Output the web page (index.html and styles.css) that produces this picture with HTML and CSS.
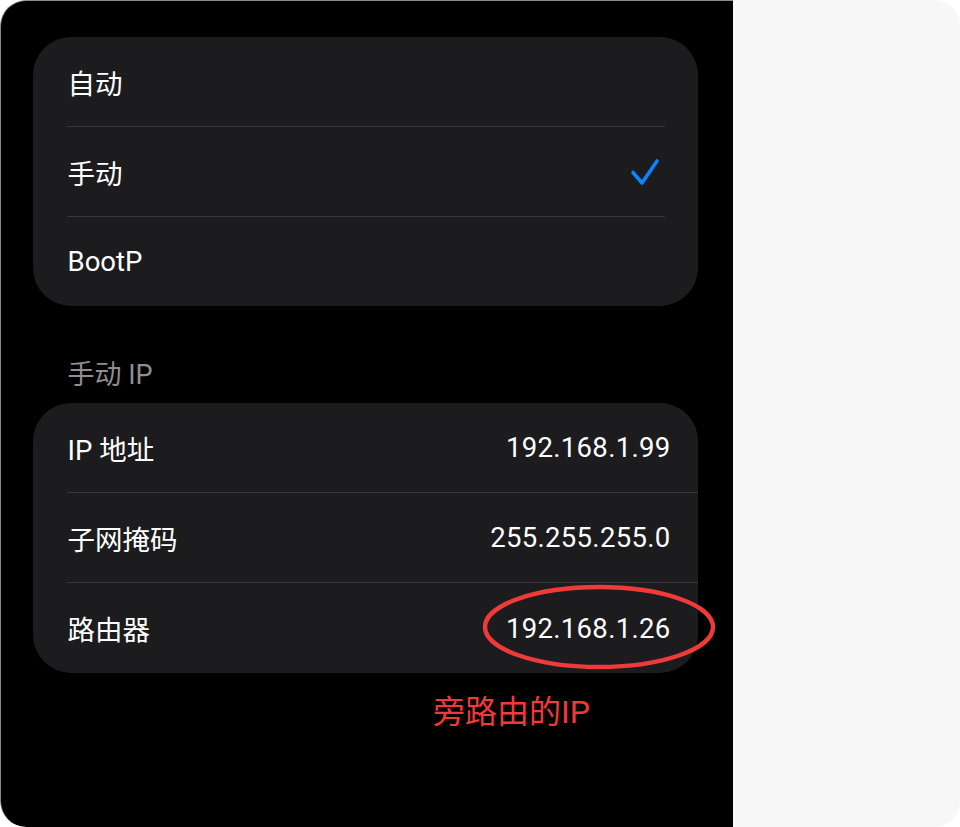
FILE: index.html
```html
<!DOCTYPE html>
<html lang="zh-CN">
<head>
<meta charset="utf-8">
<title>IP 设置</title>
<link rel="stylesheet" href="styles.css">
</head>
<body>
<div class="frame">
  <div class="screen">
    <div class="card">
      <div class="row"><span class="label">自动</span></div>
      <div class="sep inset"></div>
      <div class="row"><span class="label">手动</span>
        <svg class="check" width="32" height="30" viewBox="0 0 32 30"><path d="M4 15.5 L13 26 L28 4" fill="none" stroke="#0a84ff" stroke-width="3.6" stroke-linecap="round" stroke-linejoin="round"/></svg>
      </div>
      <div class="sep inset"></div>
      <div class="row"><span class="label">BootP</span></div>
    </div>
    <div class="section-title">手动 IP</div>
    <div class="card card-ip">
      <div class="row"><span class="label">IP 地址</span><span class="value">192.168.1.99</span></div>
      <div class="sep full"></div>
      <div class="row"><span class="label">子网掩码</span><span class="value">255.255.255.0</span></div>
      <div class="sep full"></div>
      <div class="row row-last"><span class="label">路由器</span><span class="value">192.168.1.26</span></div>
    </div>
    <svg class="ring" width="240" height="92" viewBox="0 0 240 92"><ellipse cx="120" cy="46" rx="114" ry="40" fill="none" stroke="#f03a3a" stroke-width="4.4"/></svg>
    <div class="note">旁路由的IP</div>
  </div>
  <div class="side"></div>
</div>
</body>
</html>
```
FILE: styles.css
```css
* { box-sizing: border-box; }
html, body { margin: 0; padding: 0; background: #ffffff; }
body {
  font-family: Roboto, "Noto Sans CJK SC", sans-serif;
  width: 960px;
  height: 827px;
  overflow: hidden;
}
.frame {
  width: 960px;
  height: 827px;
  border-radius: 26px;
  overflow: hidden;
  display: flex;
}
.screen {
  position: relative;
  width: 733px;
  height: 827px;
  background: #000;
  border-top: 1px solid #8a8a8a;
  border-left: 1.5px solid #8a8a8a;
  border-top-left-radius: 26px;
  border-bottom-left-radius: 26px;
  padding: 36px 0 0 31.5px;
}
.side {
  flex: 1;
  background: #f7f7f7;
}
.card {
  width: 665px;
  background: #1c1c1e;
  border-radius: 38px;
  display: flex;
  flex-direction: column;
}
.row {
  height: 89px;
  display: flex;
  align-items: center;
  justify-content: space-between;
  padding: 0 27px 0 35px;
  color: #ffffff;
  font-size: 27.5px;
}
.row-last { height: 90px; }
.check { margin-right: 10px; }
.sep { height: 1px; background: #38383a; }
.sep.inset { margin: 0 33px 0 34px; }
.sep.full { margin-left: 34px; }
.label { letter-spacing: 0; }
.value { color: #ffffff; letter-spacing: 0.3px; }
.section-title {
  height: 97px;
  padding: 55px 0 0 35px;
  line-height: 28px;
  font-size: 27px;
  color: #8e8e93;
}
.ring {
  position: absolute;
  left: 478px;
  top: 580px;
}
.note {
  position: absolute;
  left: 432px;
  top: 690px;
  font-size: 32px;
  line-height: 42px;
  color: #f03a3a;
}
```
